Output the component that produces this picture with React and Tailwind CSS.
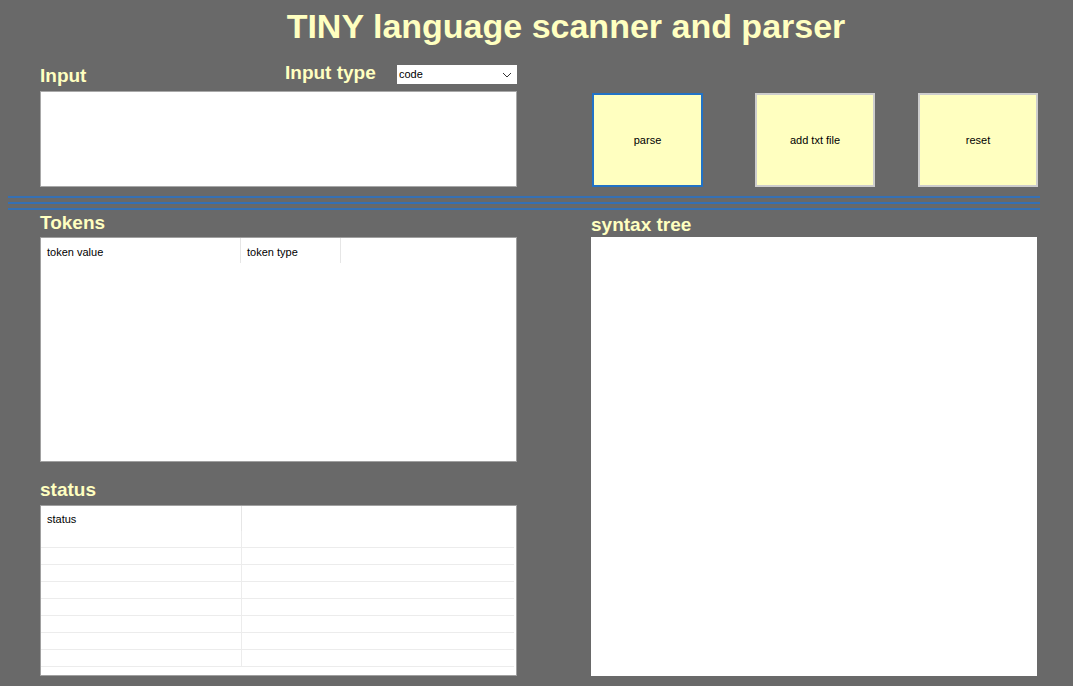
import React from "react";

const font = "font-['Liberation_Sans',Arial,sans-serif]";

function Chevron() {
  return (
    <svg width="10" height="6" viewBox="0 0 10 6" fill="none">
      <path d="M1 1 L5 5 L9 1" stroke="#333" strokeWidth="1" />
    </svg>
  );
}

function Btn({ label, active, className }) {
  return (
    <div
      className={
        "w-[111px] h-[94px] bg-[#ffffc0] flex items-center justify-center text-[11px] text-black " +
        (active ? "border-2 border-[#2272c6] " : "border-2 border-[#cdcdcd] ") +
        (className || "")
      }
    >
      {label}
    </div>
  );
}

export default function App() {
  const statusRows = Array.from({ length: 8 });
  return (
    <div className={"w-[1073px] h-[686px] bg-[#696969] overflow-hidden " + font}>
      <h1 className="pt-[8px] pl-[59px] text-center text-[34px] leading-[36px] font-bold text-[#ffffc0]">
        TINY language scanner and parser
      </h1>

      {/* top row */}
      <div className="flex h-[143px]">
        <div className="ml-[40px] w-[477px] flex flex-col">
          <div className="flex h-[47px]">
            <div className="w-[245px] mt-[22px] text-[19px] leading-[20px] font-bold text-[#ffffc0]">Input</div>
            <div className="w-[112px] mt-[19px] text-[19px] leading-[20px] font-bold text-[#ffffc0]">Input type</div>
            <div className="w-[120px] h-[19px] mt-[21px] bg-white flex items-center justify-between pl-[2px] pr-[5px] text-[11px] text-black">
              <span>code</span>
              <Chevron />
            </div>
          </div>
          <div className="h-[96px] bg-white border border-[#a8a8a8]" />
        </div>
        <div className="ml-[75px] pt-[49px] flex">
          <Btn label="parse" active />
          <Btn label="add txt file" className="ml-[52px] w-[120px]" />
          <Btn label="reset" className="ml-[43px] w-[120px]" />
        </div>
      </div>

      {/* separator lines */}
      <div className="ml-[8px] w-[1032px] h-[23px] flex flex-col">
        <div className="mt-[9px] h-[2px] shrink-0 bg-[#3570b4]" />
        <div className="mt-[4px] h-[2px] shrink-0 bg-[#3570b4]" />
        <div className="mt-[4px] h-[2px] shrink-0 bg-[#3570b4]" />
      </div>

      {/* bottom */}
      <div className="flex">
        <div className="ml-[40px] w-[477px] flex flex-col">
          <div className="mt-[2px] text-[19px] leading-[22px] font-bold text-[#ffffc0]">Tokens</div>
          <div className="mt-[3px] h-[225px] bg-white border border-[#a0a0a0]">
            <div className="flex h-[25px] text-[11px] text-black">
              <div className="w-[200px] pl-[6px] pt-[6px] border-r border-[#e6e6e6]">token value</div>
              <div className="w-[100px] pl-[6px] pt-[6px] border-r border-[#e6e6e6]">token type</div>
            </div>
          </div>

          <div className="mt-[17px] text-[19px] leading-[22px] font-bold text-[#ffffc0]">status</div>
          <div className="mt-[4px] h-[171px] bg-white border border-[#a0a0a0] flex flex-col">
            <div className="flex h-[25px] text-[11px] text-black">
              <div className="w-[201px] pl-[6px] pt-[5px] border-r border-[#e6e6e6]">status</div>
              <div className="flex-1" />
            </div>
            {statusRows.map((_, i) => (
              <div key={i} className="flex h-[17px] mr-[2px] border-b border-[#ececec]">
                <div className="w-[201px] border-r border-[#ececec]" />
                <div className="flex-1" />
              </div>
            ))}
          </div>
        </div>

        <div className="ml-[74px] w-[446px] flex flex-col">
          <div className="mt-[4px] text-[19px] leading-[22px] font-bold text-[#ffffc0]">syntax tree</div>
          <div className="mt-[1px] h-[439px] bg-white" />
        </div>
      </div>
    </div>
  );
}
